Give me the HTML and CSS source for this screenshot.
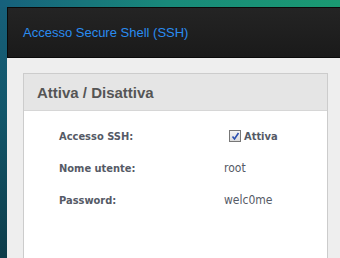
FILE: index.html
```html
<!DOCTYPE html>
<html lang="it">
<head>
    <meta charset="UTF-8">
    <title>Accesso Secure Shell (SSH)</title>
    <link rel="stylesheet" href="styles.css">
</head>
<body>
    <div class="window">
        <div class="window-header">
            <h1>Accesso Secure Shell (SSH)</h1>
        </div>
        <div class="window-body">
            <div class="panel">
                <div class="panel-header">
                    <h2>Attiva / Disattiva</h2>
                </div>
                <div class="panel-body">
                    <div class="row">
                        <span class="label">Accesso SSH:</span>
                        <label class="value check">
                            <span class="checkbox">
                                <svg width="9" height="9" viewBox="0 0 9 9"><path d="M1.5 4.5 L3.5 7 L7.5 1" fill="none" stroke="#2a4fb0" stroke-width="1.6"/></svg>
                            </span>
                            Attiva
                        </label>
                    </div>
                    <div class="row">
                        <span class="label">Nome utente:</span>
                        <span class="value">root</span>
                    </div>
                    <div class="row">
                        <span class="label">Password:</span>
                        <span class="value">welc0me</span>
                    </div>
                </div>
            </div>
        </div>
    </div>
</body>
</html>
```
FILE: styles.css
```css
html, body {
    height: 100%;
}
body {
    margin: 0;
    overflow: hidden;
    background: linear-gradient(160deg, #17607a 0%, #12566a 30%, #0d3b48 70%, #0b2c36 100%);
    font-family: 'Liberation Sans', Arial, sans-serif;
}
body::before {
    content: "";
    display: block;
    height: 7px;
    background: linear-gradient(90deg, #16607c 0%, #188a7a 50%, #1a9a72 100%);
}
.window {
    margin-left: 7px;
    background: #eeeeee;
    height: 251px;
    overflow: hidden;
}
.window-header {
    height: 49px;
    background: linear-gradient(#242424, #1a1a1a);
    border: 1px solid #0a0a0a;
    border-right: 0;
    display: flex;
    align-items: center;
}
.window-header h1 {
    margin: 0 0 0 15px;
    font-size: 13px;
    font-weight: normal;
    color: #2a8cf0;
}
.window-body {
    padding: 15px 12px 0 16px;
}
.panel {
    border: 1px solid #cccccc;
    background: #ffffff;
    height: 220px;
}
.panel-header {
    height: 36px;
    background: #e5e5e5;
    border-bottom: 1px solid #d6d6d6;
    display: flex;
    align-items: center;
}
.panel-header h2 {
    margin: 0 0 0 13px;
    font-size: 15px;
    color: #555555;
}
.panel-body {
    padding: 9px 0 0 35px;
}
.row {
    display: flex;
    align-items: center;
    height: 32px;
    font-family: Tahoma, 'DejaVu Sans Condensed', 'DejaVu Sans', sans-serif;
}
.label {
    width: 165px;
    font-size: 11px;
    font-weight: bold;
    color: #555a66;
}
.value {
    font-size: 12px;
    color: #555a66;
}
.check {
    display: flex;
    align-items: center;
    gap: 3px;
    margin-left: 5px;
    font-size: 11px;
    font-weight: bold;
}
.checkbox {
    width: 10px;
    height: 10px;
    border: 1px solid #777;
    background: linear-gradient(#f4f4f4, #dcdcdc);
    display: flex;
    align-items: center;
    justify-content: center;
}
```
